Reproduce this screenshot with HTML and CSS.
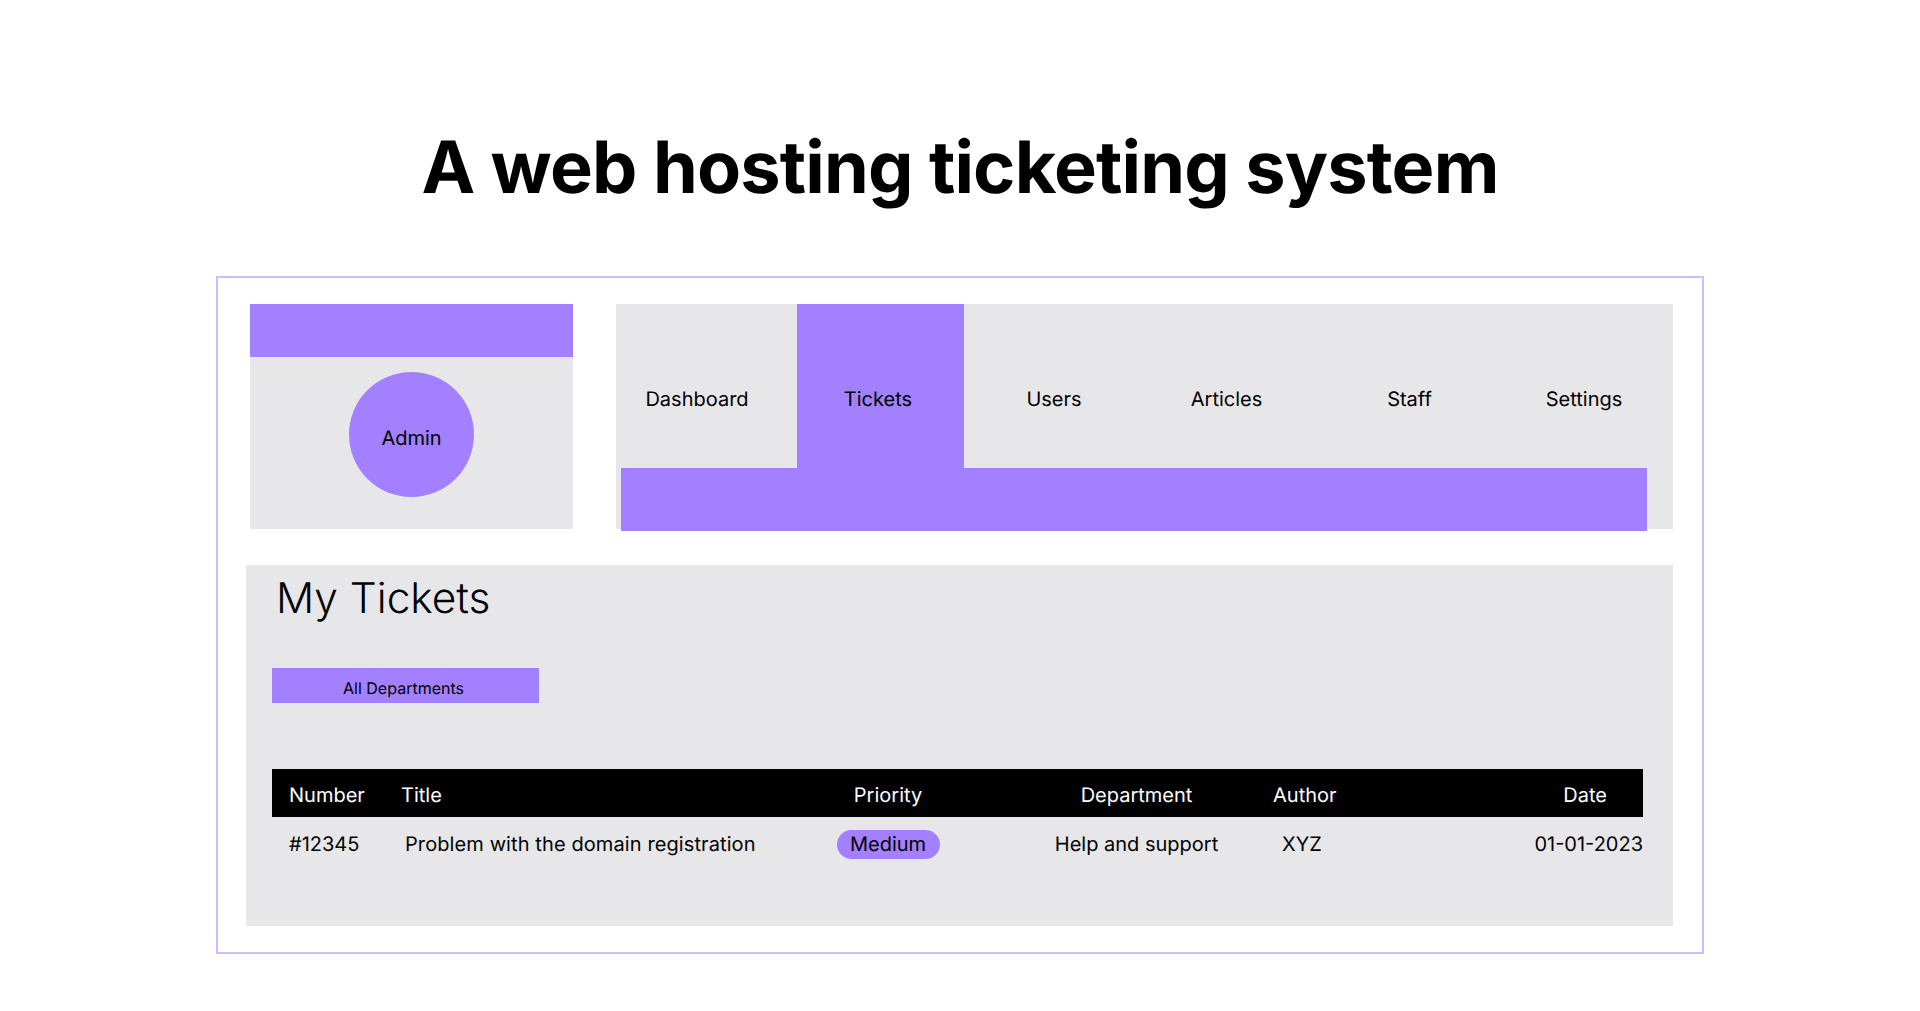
FILE: index.html
```html
<!DOCTYPE html>
<html lang="en">
<head>
    <meta charset="UTF-8">
    <title>A web hosting ticketing system</title>
    <link rel="stylesheet" href="styles.css">
</head>
<body>
    <h1 class="page-title">A web hosting ticketing system</h1>

    <div class="frame">
        <div class="top-row">
            <!-- Profile card -->
            <div class="profile">
                <div class="profile-bar"></div>
                <div class="profile-body">
                    <div class="avatar">Admin</div>
                </div>
            </div>

            <!-- Navigation -->
            <div class="nav">
                <div class="nav-items">
                    <a class="nav-item nav-dashboard">Dashboard</a>
                    <a class="nav-item nav-tickets">Tickets</a>
                    <a class="nav-item">Users</a>
                    <a class="nav-item">Articles</a>
                    <a class="nav-item">Staff</a>
                    <a class="nav-item">Settings</a>
                </div>
                <div class="nav-bar"></div>
            </div>
        </div>

        <!-- Tickets panel -->
        <div class="panel">
            <h2 class="panel-title">My Tickets</h2>
            <div class="dept-select">All Departments</div>

            <table class="tickets">
                <colgroup>
                    <col class="col-number">
                    <col class="col-title">
                    <col class="col-priority">
                    <col class="col-department">
                    <col class="col-author">
                    <col class="col-date">
                </colgroup>
                <thead>
                    <tr>
                        <th>Number</th>
                        <th class="cell-title">Title</th>
                        <th class="cell-center">Priority</th>
                        <th class="cell-department">Department</th>
                        <th>Author</th>
                        <th class="cell-date">Date</th>
                    </tr>
                </thead>
                <tbody>
                    <tr>
                        <td>#12345</td>
                        <td class="cell-title">Problem with the domain registration</td>
                        <td class="cell-center"><span class="badge">Medium</span></td>
                        <td class="cell-department">Help and support</td>
                        <td class="cell-author">XYZ</td>
                        <td class="cell-date">01-01-2023</td>
                    </tr>
                </tbody>
            </table>
        </div>
    </div>
</body>
</html>
```

FILE: styles.css
```css
* {
    margin: 0;
    padding: 0;
    box-sizing: border-box;
}

body {
    font-family: Inter, "Noto Sans", sans-serif;
    background: #fff;
    color: #000;
    padding-top: 123.5px;
    text-rendering: geometricPrecision;
}

.page-title {
    font-size: 72px;
    line-height: 88px;
    font-weight: 700;
    letter-spacing: -0.82px;
    text-align: center;
    margin-bottom: 64.5px;
}

.frame {
    width: 1488px;
    height: 677.5px;
    margin: 0 auto;
    border: 2px solid #cbbdff;
    padding: 25.5px 29px 0 28px;
}

.top-row {
    display: flex;
    height: 225.5px;
}

.profile {
    width: 323px;
    margin-left: 4px;
    margin-right: 43px;
    display: flex;
    flex-direction: column;
    background: #e7e7ea;
}

.profile-bar {
    height: 53.5px;
    background: #a280ff;
}

.profile-body {
    flex: 1;
    padding-top: 15px;
    display: flex;
    justify-content: center;
}

.avatar {
    width: 125px;
    height: 125px;
    border-radius: 50%;
    background: #a280ff;
    font-size: 20px;
    line-height: 24px;
    text-align: center;
    padding-top: 53.5px;
}

.nav {
    flex: 1;
    background: #e7e7ea;
}

.nav-items {
    display: grid;
    grid-template-columns: 181px 166.5px 181px 164px 202px 147px;
    height: 164px;
}

.nav-item {
    font-size: 20px;
    line-height: 24px;
    text-align: center;
    padding-top: 83px;
}

.nav-dashboard {
    padding-right: 19px;
}

.nav-tickets {
    background: #a280ff;
    padding-right: 4.5px;
}

.nav-bar {
    width: 1026px;
    height: 63px;
    margin-left: 5px;
    background: #a280ff;
}

.panel {
    margin-top: 35.5px;
    height: 361.5px;
    background: #e7e7ea;
    padding: 10.5px 30px 0 26px;
}

.panel-title {
    font-size: 42.4px;
    line-height: 48px;
    font-weight: 300;
    margin-left: 4px;
    margin-bottom: 44.5px;
}

.dept-select {
    width: 267px;
    height: 35.5px;
    background: #a280ff;
    font-size: 16px;
    line-height: 20px;
    text-align: center;
    padding: 10px 4px 0 0;
    margin-bottom: 65.5px;
}

.tickets {
    width: 100%;
    border-collapse: collapse;
    table-layout: fixed;
    font-size: 20px;
    line-height: 24px;
}

.col-number { width: 123px; }
.col-title { width: 425px; }
.col-priority { width: 136px; }
.col-department { width: 317px; }
.col-author { width: 227px; }
.col-date { width: 143px; }

.tickets th {
    height: 48px;
    background: #000;
    color: #fff;
    font-weight: 400;
    text-align: left;
    padding: 4.5px 0 0 17px;
}

.tickets td {
    height: 55px;
    text-align: left;
    padding-left: 17px;
}

.tickets .cell-title { padding-left: 6px; }
.tickets td.cell-title { padding-left: 10px; letter-spacing: 0.1px; }
.tickets .cell-center { text-align: center; padding-left: 0; }
.tickets .cell-department { text-align: center; padding-left: 44px; }
.tickets th:nth-child(5) { padding-left: 0; }
.tickets .cell-author { padding-left: 9px; }
.tickets .cell-date { text-align: right; padding-left: 0; }
.tickets th.cell-date { padding-right: 36px; }

.badge {
    display: inline-block;
    width: 103px;
    height: 29px;
    line-height: 28px;
    border-radius: 15px;
    background: #a280ff;
    vertical-align: middle;
}
```
